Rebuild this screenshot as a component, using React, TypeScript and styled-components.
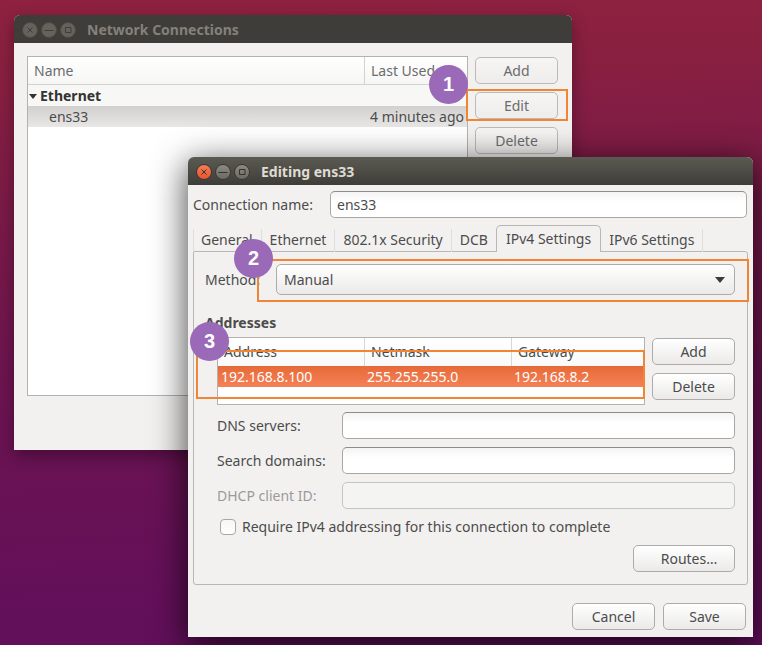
import React, { useState } from "react";
import styled, { createGlobalStyle, css } from "styled-components";

const GlobalStyle = createGlobalStyle`
  *, *::before, *::after { box-sizing: border-box; }
  body {
    margin: 0;
    color: #4c4c4c;
    font: 14px/20px "Noto Sans", "Open Sans", sans-serif;
  }
  button, input, select { font: inherit; color: inherit; margin: 0; }
`;

const Desktop = styled.main`
  position: relative;
  min-height: 100vh;
  overflow: hidden;
  background: linear-gradient(178deg, #8e2140 0%, #8a2040 10%, #7a1a48 32%, #6c1450 58%, #64105a 90%, #600f5a 100%);
`;

const Window = styled.section<{ $active?: boolean }>`
  position: absolute;
  background: #f2f1f0;
  border-radius: 6px 6px 0 0;
  box-shadow: ${(p) =>
    p.$active
      ? "0 8px 34px 2px rgba(0, 0, 0, 0.7)"
      : "0 6px 16px rgba(0, 0, 0, 0.35)"};
`;

const ConnectionsWindow = styled(Window)`
  top: 15px;
  left: 14px;
  right: 190px;
`;

const EditorWindow = styled(Window)`
  top: 157px;
  left: 188px;
  right: 9px;
`;

const TitleBar = styled.header<{ $active?: boolean }>`
  display: flex;
  align-items: center;
  gap: 3px;
  height: 28px;
  padding: 1px 7px 0 8px;
  border-radius: 6px 6px 0 0;
  background: ${(p) =>
    p.$active ? "linear-gradient(#5b5a52, #3e3d39)" : "#3e3d39"};
  color: ${(p) => (p.$active ? "#dfdbd2" : "#84817b")};
`;

const WindowTitle = styled.h1`
  margin: 0 0 0 8px;
  font-size: 14px;
  font-weight: 700;
`;

const WindowButton = styled.button<{ $tone: "close" | "plain" | "dim" }>`
  width: 16px;
  height: 16px;
  padding: 0;
  border: 1px solid ${(p) => (p.$tone === "dim" ? "#4c4a45" : "#3a3934")};
  border-radius: 50%;
  color: ${(p) => (p.$tone === "dim" ? "#3e3d39" : "#33322e")};
  background: ${(p) =>
    p.$tone === "close"
      ? "linear-gradient(#f47c55, #e8552c)"
      : p.$tone === "plain"
        ? "linear-gradient(#8c8a82, #6b6a63)"
        : "#65625c"};
  svg { display: block; }
`;

const Glyph = ({ d }: { d: string }) => (
  <svg width="14" height="14" viewBox="0 0 14 14" fill="none" stroke="currentColor" aria-hidden="true">
    <path d={d} />
  </svg>
);

function WindowControls({ active }: { active?: boolean }) {
  const tone = active ? "plain" : "dim";
  return (
    <>
      <WindowButton $tone={active ? "close" : "dim"} aria-label="Close">
        <Glyph d="M4.5 4.5l5 5M9.5 4.5l-5 5" />
      </WindowButton>
      <WindowButton $tone={tone} aria-label="Minimize">
        <Glyph d="M2.5 7.5h9" />
      </WindowButton>
      <WindowButton $tone={tone} aria-label="Maximize">
        <Glyph d="M4.5 4.5h5.5v5h-5.5z" />
      </WindowButton>
    </>
  );
}

const Button = styled.button<{ $muted?: boolean; $wide?: boolean }>`
  width: ${(p) => (p.$wide ? 102 : 83)}px;
  height: 27px;
  padding: ${(p) => (p.$wide ? "0 0 0 10px" : "0")};
  border: 1px solid ${(p) => (p.$muted ? "#bcbab7" : "#aeacaa")};
  border-radius: 5px;
  background: ${(p) =>
    p.$muted ? "linear-gradient(#f6f5f4, #eeedec)" : "linear-gradient(#ffffff, #ebeae9)"};
  color: ${(p) => (p.$muted ? "#6c6c6c" : "#4c4c4c")};
  line-height: 20px;
`;

const ButtonColumn = styled.div`
  display: flex;
  flex-direction: column;
  gap: 8px;
  padding-top: 1px;
`;

const ConnectionsBody = styled.div`
  display: grid;
  grid-template-columns: minmax(0, 1fr) 83px;
  gap: 7px;
  padding: 13px 14px 54px 13px;
`;

const ListFrame = styled.div`
  min-height: 340px;
  border: 1px solid #b4b2b0;
  background: #fff;
`;

const table = css`
  width: 100%;
  table-layout: fixed;
  border-collapse: separate;
  border-spacing: 0;
  text-align: left;
  th, td { padding: 0 0 0 6px; white-space: nowrap; }
`;

const ConnectionTable = styled.table`
  ${table}
  thead th {
    height: 28px;
    font-weight: 400;
    color: #6c6c6c;
    background: linear-gradient(#fff, #f6f6f5);
    border-bottom: 1px solid #d4d2d0;
  }
  thead th + th { width: 103px; border-left: 1px solid #d4d2d0; }
`;

const GroupRow = styled.tr`
  th {
    height: 21px;
    padding: 0 0 0 1px;
    font-weight: 700;
    color: #333;
    background: #f7f7f6;
  }
  svg { margin-right: 3px; vertical-align: 2px; }
`;

const ConnectionRow = styled.tr`
  background: linear-gradient(#d2d0ce, #e8e7e6);
  td { height: 21px; }
  td:first-child { padding-left: 21px; }
  td:last-child { padding: 0 3px 0 0; text-align: right; }
`;

const EditorBody = styled.div`
  padding: 6px 6px 7px 5px;
`;

const NameRow = styled.div`
  display: grid;
  grid-template-columns: 137px minmax(0, 1fr);
  align-items: center;
`;

const Field = styled.input`
  width: 100%;
  height: 27px;
  padding: 0 6px;
  border: 1px solid #a9a7a5;
  border-top-color: #8f8d8b;
  border-radius: 5px;
  background: linear-gradient(#f4f4f4, #fff 40%);
  outline: none;
  &:disabled { border-color: #c6c4c2; background: #f4f4f3; }
`;

const TabBar = styled.div`
  display: flex;
  align-items: flex-end;
  height: 27px;
  margin-top: 7px;
`;

const Tab = styled.button<{ $selected?: boolean }>`
  height: 23px;
  padding: 0 8px 2px;
  border: 0;
  border-right: 1px solid #e0dedc;
  background: none;
  white-space: nowrap;
  line-height: 20px;
  &:first-child { padding-left: 7px; border-left: 1px solid #e0dedc; }
  &:has(+ [aria-selected="true"]) { border-right: 0; }
  ${(p) =>
    p.$selected &&
    css`
      z-index: 1;
      height: 27px;
      padding: 0 9px;
      border: 1px solid #b9b7b5;
      border-bottom: 0;
      border-radius: 5px 5px 0 0;
      background: #f2f1f0;
    `}
`;

const TabPanel = styled.div`
  margin: -1px -1px 0 0;
  padding: 12px 12px 12px 11px;
  border: 1px solid #b9b7b5;
  border-radius: 0 3px 3px 3px;
`;

const MethodRow = styled.div`
  display: grid;
  grid-template-columns: 71px minmax(0, 1fr);
  align-items: center;
`;

const Target = styled.div`
  position: relative;
`;

const MethodSelect = styled.select`
  display: block;
  width: 100%;
  height: 31px;
  padding: 0 30px 0 7px;
  appearance: none;
  border: 1px solid #aeacaa;
  border-radius: 5px;
  background: linear-gradient(#fff, #ebeae9);
`;

const SelectArrow = styled.svg`
  position: absolute;
  top: 13px;
  right: 10px;
  pointer-events: none;
`;

const SectionTitle = styled.h2`
  margin: 18px 0 4px;
  font-size: 14px;
  font-weight: 700;
  line-height: 20px;
`;

const Indented = styled.div`
  padding-left: 12px;
`;

const AddressLayout = styled(Target)`
  display: grid;
  grid-template-columns: minmax(0, 1fr) 83px;
  gap: 7px;
`;

const AddressFrame = styled(Target)`
  min-height: 68px;
  border: 1px solid #b4b2b0;
  background: #fff;
`;

const AddressTable = styled.table`
  ${table}
  th {
    width: 147px;
    height: 28px;
    font-weight: 400;
    background: linear-gradient(#fff, #f9f9f9);
  }
  th:first-child { width: 146px; }
  th + th { border-left: 1px solid #d8d6d4; }
  th:last-child { width: auto; }
  td {
    height: 21px;
    padding-left: 3px;
    color: #fff;
  }
  tbody tr { background: linear-gradient(#e66a38, #f58157); }
`;

const Form = styled.div`
  display: grid;
  grid-template-columns: 125px minmax(0, 1fr);
  align-items: center;
  row-gap: 8px;
  margin-top: 7px;
`;

const Label = styled.label<{ $disabled?: boolean }>`
  white-space: nowrap;
  color: ${(p) => (p.$disabled ? "#9b9a99" : "inherit")};
`;

const CheckRow = styled.div`
  display: flex;
  align-items: center;
  gap: 6px;
  margin: 8px 0 8px 3px;
`;

const Check = styled.input`
  width: 16px;
  height: 16px;
  appearance: none;
  border: 1px solid #a9a7a5;
  border-radius: 4px;
  background: linear-gradient(#f6f6f6, #fff);
  &:checked { background: #f07746; }
`;

const Actions = styled.div`
  display: flex;
  justify-content: flex-end;
  gap: 8px;
`;

const DialogActions = styled(Actions)`
  padding: 18px 1px 0 0;
`;

const Outline = styled.span<{ $inset: string }>`
  position: absolute;
  inset: ${(p) => p.$inset};
  border: 2px solid #ef8535;
  pointer-events: none;
`;

const Badge = styled.span<{ $x: number; $y: number }>`
  position: absolute;
  left: ${(p) => p.$x}px;
  top: ${(p) => p.$y}px;
  width: 39px;
  height: 39px;
  border-radius: 50%;
  background: #9a69b8;
  color: #fff;
  font: bold 20px/38px "Liberation Sans", Arial, sans-serif;
  text-align: center;
  pointer-events: none;
`;

function Callout({ step, inset, x, y }: { step: number; inset: string; x: number; y: number }) {
  return (
    <>
      <Outline $inset={inset} />
      <Badge $x={x} $y={y}>{step}</Badge>
    </>
  );
}

const TABS = ["General", "Ethernet", "802.1x Security", "DCB", "IPv4 Settings", "IPv6 Settings"];

export default function App() {
  const [name, setName] = useState("ens33");
  const [tab, setTab] = useState("IPv4 Settings");
  return (
    <>
      <GlobalStyle />
      <Desktop>
        <ConnectionsWindow aria-label="Network Connections">
          <TitleBar>
            <WindowControls />
            <WindowTitle>Network Connections</WindowTitle>
          </TitleBar>
          <ConnectionsBody>
            <ListFrame>
              <ConnectionTable>
                <thead>
                  <tr>
                    <th scope="col">Name</th>
                    <th scope="col">Last Used</th>
                  </tr>
                </thead>
                <tbody>
                  <GroupRow>
                    <th colSpan={2} scope="rowgroup">
                      <svg width="8" height="5" viewBox="0 0 8 5" aria-hidden="true">
                        <path d="M0 0h8L4 5z" fill="#333" />
                      </svg>
                      Ethernet
                    </th>
                  </GroupRow>
                  <ConnectionRow>
                    <td>ens33</td>
                    <td>4 minutes ago</td>
                  </ConnectionRow>
                </tbody>
              </ConnectionTable>
            </ListFrame>
            <ButtonColumn>
              <Button $muted>Add</Button>
              <Target>
                <Button $muted>Edit</Button>
                <Callout step={1} inset="-3px -10px -2px -9px" x={-46} y={-27} />
              </Target>
              <Button $muted>Delete</Button>
            </ButtonColumn>
          </ConnectionsBody>
        </ConnectionsWindow>

        <EditorWindow $active aria-label="Editing ens33">
          <TitleBar $active>
            <WindowControls active />
            <WindowTitle>Editing ens33</WindowTitle>
          </TitleBar>
          <EditorBody>
            <NameRow>
              <Label htmlFor="name">Connection name:</Label>
              <Field id="name" value={name} onChange={(e) => setName(e.target.value)} />
            </NameRow>
            <TabBar role="tablist">
              {TABS.map((t) => (
                <Tab key={t} role="tab" aria-selected={t === tab} $selected={t === tab} onClick={() => setTab(t)}>
                  {t}
                </Tab>
              ))}
            </TabBar>
            <TabPanel role="tabpanel">
              <MethodRow>
                <Label htmlFor="method">Method:</Label>
                <Target>
                  <MethodSelect id="method" defaultValue="Manual">
                    <option>Manual</option>
                  </MethodSelect>
                  <SelectArrow width="10" height="6" viewBox="0 0 10 6" aria-hidden="true">
                    <path d="M0 0h10L5 6z" fill="#3c3c3c" />
                  </SelectArrow>
                  <Callout step={2} inset="-5px -14px -7px -19px" x={-42} y={-25} />
                </Target>
              </MethodRow>
              <SectionTitle>Addresses</SectionTitle>
              <Indented>
                <AddressLayout>
                  <AddressFrame>
                    <AddressTable>
                      <thead>
                        <tr>
                          <th scope="col">Address</th>
                          <th scope="col">Netmask</th>
                          <th scope="col">Gateway</th>
                        </tr>
                      </thead>
                      <tbody>
                        <tr>
                          <td>192.168.8.100</td>
                          <td>255.255.255.0</td>
                          <td>192.168.8.2</td>
                        </tr>
                      </tbody>
                    </AddressTable>
                    <Callout step={3} inset="12px -1px 5px -22px" x={-28} y={-16} />
                  </AddressFrame>
                  <ButtonColumn>
                    <Button>Add</Button>
                    <Button>Delete</Button>
                  </ButtonColumn>
                </AddressLayout>
                <Form>
                  <Label htmlFor="dns">DNS servers:</Label>
                  <Field id="dns" />
                  <Label htmlFor="search">Search domains:</Label>
                  <Field id="search" />
                  <Label htmlFor="dhcp" $disabled>DHCP client ID:</Label>
                  <Field id="dhcp" disabled />
                </Form>
                <CheckRow>
                  <Check type="checkbox" id="require" />
                  <Label htmlFor="require">Require IPv4 addressing for this connection to complete</Label>
                </CheckRow>
                <Actions>
                  <Button $wide>Routes…</Button>
                </Actions>
              </Indented>
            </TabPanel>
            <DialogActions>
              <Button>Cancel</Button>
              <Button>Save</Button>
            </DialogActions>
          </EditorBody>
        </EditorWindow>
      </Desktop>
    </>
  );
}
